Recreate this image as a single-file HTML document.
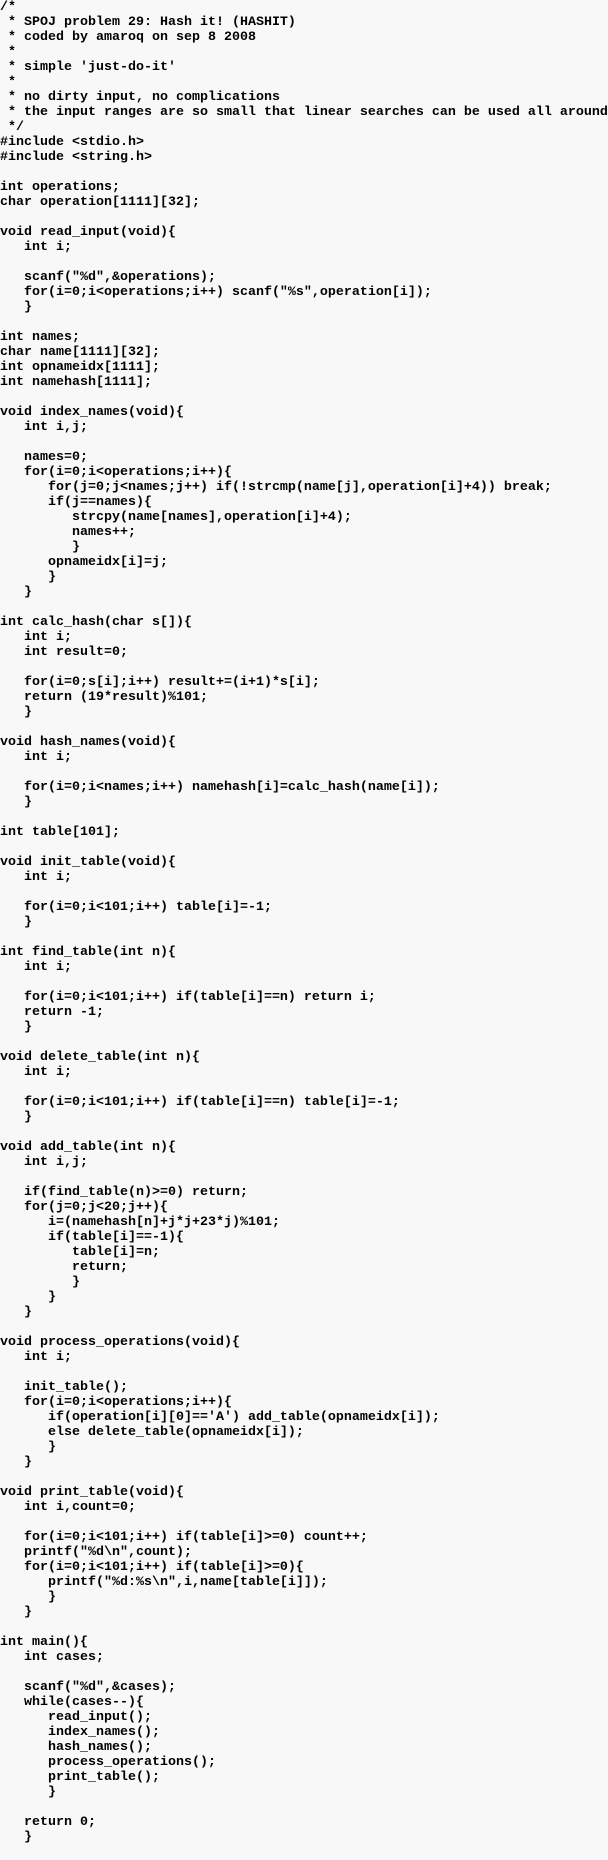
<!DOCTYPE html>
<html><head><meta charset="utf-8"><style>
html,body{margin:0;padding:0;background:#f8f8f8;width:608px;height:1860px;overflow:hidden}
pre{margin:0;font-family:"Liberation Mono",monospace;font-size:13.33px;line-height:15px;font-weight:bold;color:#000;white-space:pre}
</style></head><body><pre>/*
 * SPOJ problem 29: Hash it! (HASHIT)
 * coded by amaroq on sep 8 2008
 *
 * simple 'just-do-it'
 *
 * no dirty input, no complications
 * the input ranges are so small that linear searches can be used all around
 */
#include &lt;stdio.h&gt;
#include &lt;string.h&gt;

int operations;
char operation[1111][32];

void read_input(void){
   int i;

   scanf("%d",&amp;operations);
   for(i=0;i&lt;operations;i++) scanf("%s",operation[i]);
   }

int names;
char name[1111][32];
int opnameidx[1111];
int namehash[1111];

void index_names(void){
   int i,j;

   names=0;
   for(i=0;i&lt;operations;i++){
      for(j=0;j&lt;names;j++) if(!strcmp(name[j],operation[i]+4)) break;
      if(j==names){
         strcpy(name[names],operation[i]+4);
         names++;
         }
      opnameidx[i]=j;
      }
   }

int calc_hash(char s[]){
   int i;
   int result=0;

   for(i=0;s[i];i++) result+=(i+1)*s[i];
   return (19*result)%101;
   }

void hash_names(void){
   int i;

   for(i=0;i&lt;names;i++) namehash[i]=calc_hash(name[i]);
   }

int table[101];

void init_table(void){
   int i;

   for(i=0;i&lt;101;i++) table[i]=-1;
   }

int find_table(int n){
   int i;

   for(i=0;i&lt;101;i++) if(table[i]==n) return i;
   return -1;
   }

void delete_table(int n){
   int i;

   for(i=0;i&lt;101;i++) if(table[i]==n) table[i]=-1;
   }

void add_table(int n){
   int i,j;

   if(find_table(n)&gt;=0) return;
   for(j=0;j&lt;20;j++){
      i=(namehash[n]+j*j+23*j)%101;
      if(table[i]==-1){
         table[i]=n;
         return;
         }
      }
   }

void process_operations(void){
   int i;

   init_table();
   for(i=0;i&lt;operations;i++){
      if(operation[i][0]=='A') add_table(opnameidx[i]);
      else delete_table(opnameidx[i]);
      }
   }

void print_table(void){
   int i,count=0;

   for(i=0;i&lt;101;i++) if(table[i]&gt;=0) count++;
   printf("%d\n",count);
   for(i=0;i&lt;101;i++) if(table[i]&gt;=0){
      printf("%d:%s\n",i,name[table[i]]);
      }
   }

int main(){
   int cases;

   scanf("%d",&amp;cases);
   while(cases--){
      read_input();
      index_names();
      hash_names();
      process_operations();
      print_table();
      }

   return 0;
   }
</pre></body></html>
